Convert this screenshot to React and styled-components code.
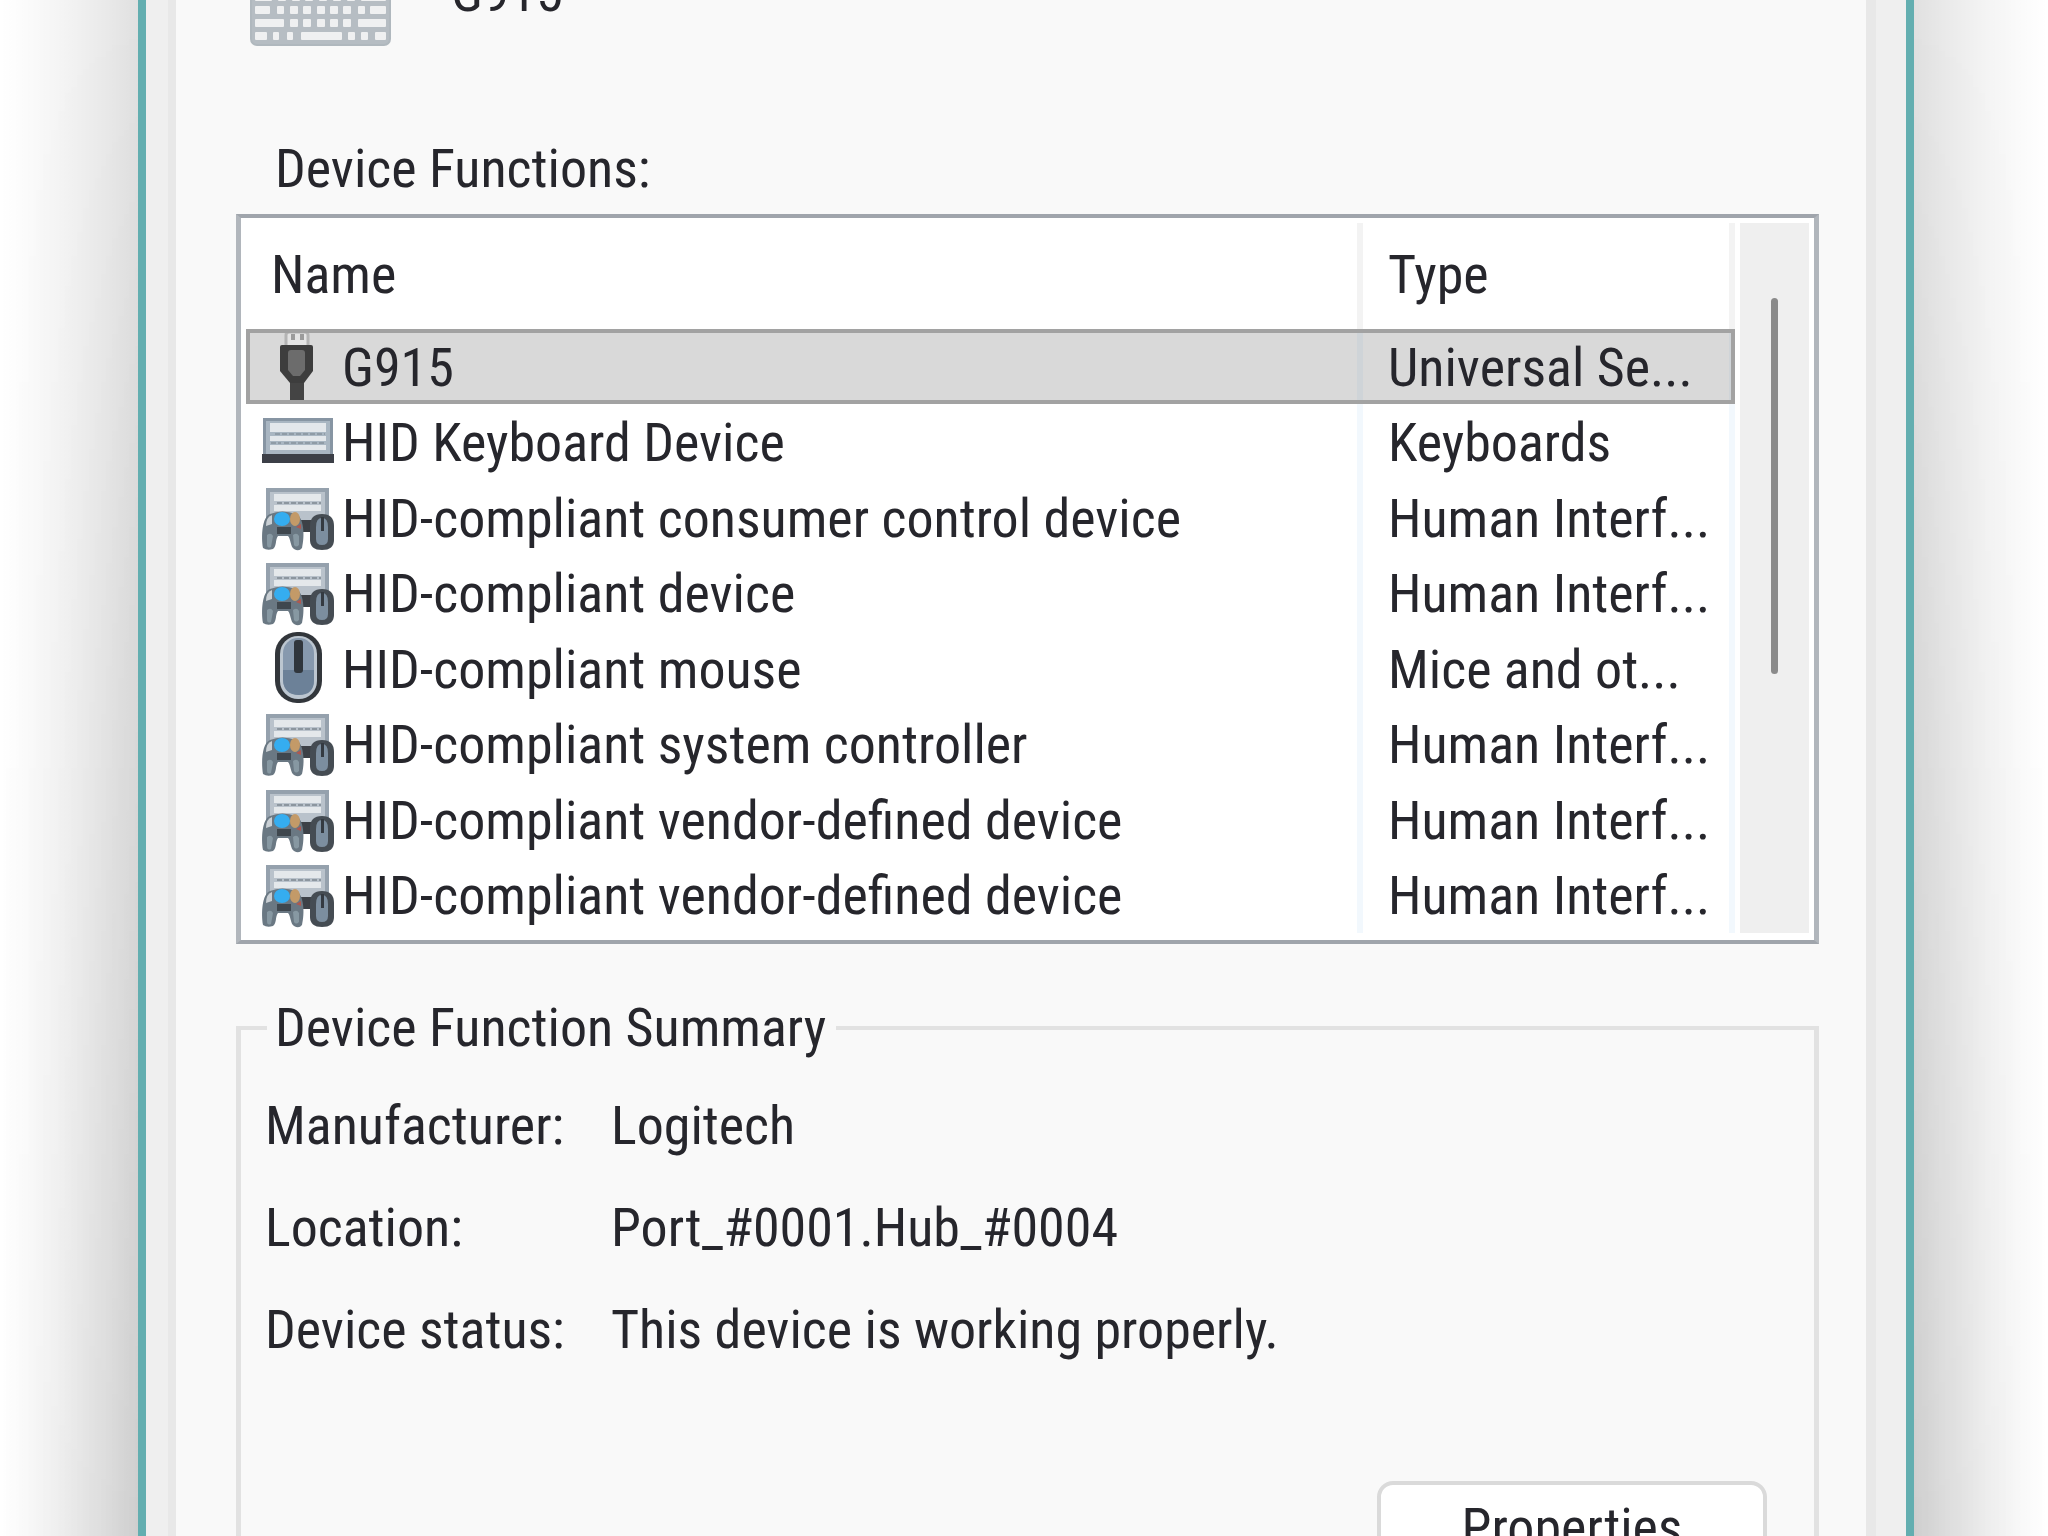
import React from 'react';
import styled, { createGlobalStyle } from 'styled-components';

const devices = [
  { icon: 'usb', name: 'G915', type: 'Universal Se...', selected: true },
  { icon: 'keyboard', name: 'HID Keyboard Device', type: 'Keyboards' },
  { icon: 'hid', name: 'HID-compliant consumer control device', type: 'Human Interf...' },
  { icon: 'hid', name: 'HID-compliant device', type: 'Human Interf...' },
  { icon: 'mouse', name: 'HID-compliant mouse', type: 'Mice and ot...' },
  { icon: 'hid', name: 'HID-compliant system controller', type: 'Human Interf...' },
  { icon: 'hid', name: 'HID-compliant vendor-defined device', type: 'Human Interf...' },
  { icon: 'hid', name: 'HID-compliant vendor-defined device', type: 'Human Interf...' },
];

// [x, width] of every key, top row first
const keyRows = [
  [[5, 12], [23, 8], [37, 8], [51, 8], [64, 8], [78, 8], [92, 8], [106, 8], [120, 16]],
  [[5, 17], [28, 8], [42, 8], [55, 8], [69, 8], [83, 8], [97, 8], [111, 25]],
  [[5, 15], [27, 7], [40, 8], [53, 8], [67, 8], [80, 8], [93, 8], [108, 7], [120, 16]],
  [[5, 29], [40, 8], [53, 8], [67, 8], [80, 8], [93, 8], [108, 28]],
  [[5, 12], [23, 6], [37, 6], [51, 41], [98, 7], [111, 7], [125, 11]],
];

function BigKeyboard() {
  return (
    <svg width="141" height="76" viewBox="0 0 141 76" aria-hidden="true">
      <rect x="1" y="1" width="139" height="74" rx="6" fill="#b6bdc3" stroke="#b0b8be" strokeWidth="2" />
      {keyRows.map((row, i) => row.map(([x, w]) => (
        <rect key={`${i}-${x}`} x={x} y={10 + i * 13} width={w} height="8" rx="1" fill="#eff0f1" />
      )))}
    </svg>
  );
}

function UsbIcon() {
  return (
    <>
      <path d="M24 17V5q0-3 3-3h16q3 0 3 3v12z" fill="#e4e4e4" stroke="#b4b4b4" strokeWidth="3" />
      <path d="M29 4h4v6h-4zM38 4h4v6h-4z" fill="#9b9b9b" />
      <path d="M28 48h14v22H28z" fill="#444" />
      <path d="M18 17q0-2 2-2h29q2 0 2 2v24L42 53H28L18 41z" fill="#3d3d3d" />
      <path d="M26 23q0-3 3-3h11q3 0 3 3v17l-5 6h-7l-5-6z" fill="#6c6c6c" />
    </>
  );
}

function KeyboardIcon() {
  return (
    <>
      <path d="M1 13h70v37H1z" fill="#8795a3" />
      <path d="M4 16h64v33H4z" fill="#a9b6c2" />
      <path d="M8 18h56v9H8zM8 31h56v5H8zM8 40h56v5H8z" fill="#e3e7eb" />
      <path d="M13 29h50M9 38h10M22 38h42" stroke="#8f9ba6" strokeWidth="2" strokeDasharray="5 2" />
      <path d="M0 49h72v9H0z" fill="#3c3f47" />
    </>
  );
}

function HidIcon() {
  return (
    <>
      <path d="M4 7h63v36H4z" fill="#95a1ad" />
      <path d="M8 11h55v30H8z" fill="#b9c2cb" />
      <path d="M12 13h47v7H12zM12 24h47v6H12z" fill="#e4e8eb" />
      <path d="M15 22h44" stroke="#8c969f" strokeWidth="2" strokeDasharray="5 2" />
      <path d="M36 39h16v12H38z" fill="#3d4147" />
      <path d="M1 67C-1 55 0 36 8 33q12-5 26 0c8 3 9 22 6 34q-3 4-8 1c-4-3-3-10-6-13H16c-3 4-1 10-5 13q-6 2-10-1z" fill="#6a7883" />
      <path d="M4 45q0-9 6-11v9z" fill="#c9cfd4" />
      <path d="M15 46h14v7H15z" fill="#3f474e" />
      <path d="M5 54q4-3 6 1l-2 11q-4 2-4-3zM31 54q4-3 6 1v9q-3 3-5 0z" fill="#8798a2" />
      <ellipse cx="20" cy="38" rx="8" ry="7" fill="#35adf0" />
      <ellipse cx="33" cy="38" rx="5" ry="7" fill="#c39a68" />
      <path d="M34 46l5-3v5z" fill="#b0574f" />
      <path d="M48 45q0-12 12-12t12 12v14q0 10-12 10T48 59z" fill="#454c53" />
      <path d="M54 46q0-9 6-9t6 9v12q0 6-6 6t-6-6z" fill="#7c8e9f" />
      <path d="M59 36h3v14h-3z" fill="#343a41" />
    </>
  );
}

function MouseIcon() {
  return (
    <>
      <rect x="13" y="0" width="47" height="71" rx="22" fill="#32363b" />
      <rect x="18" y="4" width="37" height="63" rx="18" fill="#bcc6d0" />
      <rect x="21" y="6" width="31" height="57" rx="15" fill="#8799ae" />
      <path d="M21 38h31v10q0 15-15 15T21 48z" fill="#6c8198" />
      <rect x="32" y="8" width="9" height="33" rx="3" fill="#30363d" />
    </>
  );
}

const icons = { usb: UsbIcon, keyboard: KeyboardIcon, hid: HidIcon, mouse: MouseIcon };

function DeviceIcon({ kind }) {
  const Drawing = icons[kind];
  return (
    <RowIcon viewBox="0 2 72 72" aria-hidden="true">
      <Drawing />
    </RowIcon>
  );
}

function DeviceList() {
  return (
    <ListBox>
      <Table aria-labelledby="functions-label">
        <thead>
          <tr>
            <HeadCell scope="col">Name</HeadCell>
            <HeadCell scope="col" $narrow>Type</HeadCell>
          </tr>
        </thead>
        <tbody>
          {devices.map((d, i) => (
            <Row key={i} $selected={d.selected}>
              <Cell>
                <NameLine>
                  <DeviceIcon kind={d.icon} />
                  {d.name}
                </NameLine>
              </Cell>
              <Cell>
                <TypeLine>{d.type}</TypeLine>
              </Cell>
            </Row>
          ))}
        </tbody>
      </Table>
      <ScrollTrack>
        <ScrollThumb />
      </ScrollTrack>
    </ListBox>
  );
}

function App() {
  return (
    <Desktop>
      <GlobalStyle />
      <Shade $toward="left" />
      <Window>
        <Page>
          <Header>
            <BigKeyboard />
            <Title>G915</Title>
          </Header>
          <Label id="functions-label">Device Functions:</Label>
          <DeviceList />
          <Summary>
            <Legend>Device Function Summary</Legend>
            <Details>
              <dt>Manufacturer:</dt>
              <dd>Logitech</dd>
              <dt>Location:</dt>
              <dd>Port_#0001.Hub_#0004</dd>
              <dt>Device status:</dt>
              <dd>This device is working properly.</dd>
            </Details>
            <Button type="button">Properties</Button>
          </Summary>
        </Page>
      </Window>
      <Shade $toward="right" />
    </Desktop>
  );
}

export default App;

const GlobalStyle = createGlobalStyle`
    * {
        box-sizing: border-box;
    }
    body {
        margin: 0;
        background: #fff;
        color: #26262c;
        font: 54px/64px "Roboto Condensed", Roboto, "Liberation Sans", sans-serif;
    }
`;

const Desktop = styled.div`
    display: flex;
    height: 100vh;
    overflow: hidden;
`;

const fade = (side, strength) => `linear-gradient(to ${side},
    rgba(0, 0, 0, ${strength}), rgba(0, 0, 0, ${strength * 0.7}) 25%,
    rgba(0, 0, 0, ${strength * 0.36}) 55%, rgba(0, 0, 0, ${strength * 0.12}) 82%, transparent)`;

// the drop shadow gets stronger towards the bottom of the window
const Shade = styled.div`
    flex: 0 0 ${(p) => (p.$toward === 'left' ? 138 : 134)}px;
    display: grid;
    background: ${(p) => fade(p.$toward, 0.12)};

    &::after {
        content: '';
        background: ${(p) => fade(p.$toward, 0.08)};
        mask-image: linear-gradient(transparent, #000);
    }
`;

const Window = styled.main`
    flex: 1;
    min-width: 0;
    height: 100%;
    padding: 0 30px 0 22px;
    border: solid #63aeb0;
    border-width: 0 8px;
    background: #efefef;
`;

const Page = styled.div`
    height: 100%;
    overflow: hidden;
    padding: 0 47px 0 60px;
    border: solid #e8e8e8;
    border-width: 0 10px 0 8px;
    background: #f9f9f9;
`;

const Header = styled.header`
    display: flex;
    align-items: flex-end;
    gap: 60px;
    height: 46px;
    overflow: hidden;
    padding-left: 14px;
    margin-bottom: 91px;

    svg {
        flex: none;
    }
`;

const Title = styled.div`
    padding-bottom: 21px;
`;

const Label = styled.div`
    padding-left: 39px;
    margin-bottom: 13px;
`;

const ListBox = styled.div`
    display: flex;
    gap: 5px;
    padding: 5px 5px 7px;
    border: 4px solid #a0a5ac;
    border-left: 5px solid #b1b6bc;
    border-right: 5px solid #b1b6bc;
    background: #fff;
`;

const Table = styled.table`
    flex: 1;
    min-width: 0;
    table-layout: fixed;
    border-collapse: separate;
    border-spacing: 0;
    white-space: nowrap;
`;

const HeadCell = styled.th`
    width: ${(p) => (p.$narrow ? '372px' : 'auto')};
    height: 106px;
    padding: 0 0 2px 25px;
    border-right: 6px solid #f3f3f3;
    font-weight: 400;
    text-align: left;
`;

const Cell = styled.td`
    padding: 2px 0 0;
    border-right: 6px solid #f2f8fd;
`;

const Row = styled.tr`
    height: 75px;

    &:nth-child(even) {
        height: 76px;
    }

    ${(p) => p.$selected && `
        background: #d9d9d9;
        outline: 4px solid #a2a2a2;
        outline-offset: -4px;

        ${Cell} {
            border-color: #cfd4d8;
        }
    `}
`;

const NameLine = styled.div`
    display: flex;
    align-items: center;
    gap: 8px;
    padding-left: 16px;
`;

const TypeLine = styled.div`
    padding-left: 25px;
`;

const RowIcon = styled.svg`
    flex: none;
    width: 72px;
    height: 72px;
    overflow: visible;
`;

const ScrollTrack = styled.div`
    flex: 0 0 69px;
    padding: 75px 31px 0;
    background: #efefef;
`;

const ScrollThumb = styled.div`
    height: 376px;
    border-radius: 4px;
    background: #8a8a8a;
`;

const Summary = styled.fieldset`
    min-width: 0;
    margin: 52px 0 0;
    padding: 34px 47px 0 24px;
    border: 4px solid #e2e2e2;
    border-left-width: 5px;
    border-right-width: 5px;
`;

const Legend = styled.legend`
    margin-left: 2px;
    padding: 0 10px 0 8px;
`;

const Details = styled.dl`
    display: grid;
    grid-template-columns: 346px 1fr;
    row-gap: 38px;
    margin: 0 0 119px;

    dd {
        margin: 0;
    }
`;

const Button = styled.button`
    display: block;
    width: 390px;
    margin-left: auto;
    padding: 11px 0;
    border: 4px solid #dadada;
    border-radius: 16px;
    background: #fff;
    color: inherit;
    font: inherit;
`;
